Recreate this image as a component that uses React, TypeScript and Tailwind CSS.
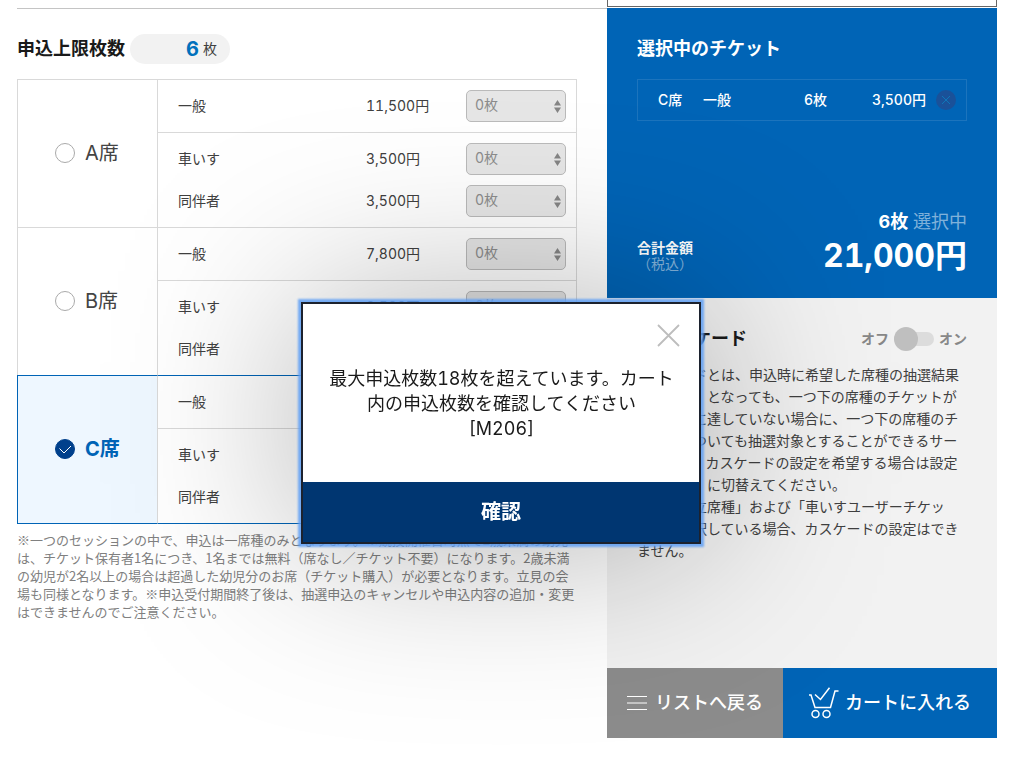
import React from "react";

interface Ticket {
  label: string;
  price: string;
  count: number;
}

interface Seat {
  id: string;
  name: string;
  tickets: Ticket[];
}

const seats: Seat[] = [
  {
    id: "a",
    name: "A席",
    tickets: [
      { label: "一般", price: "11,500円", count: 0 },
      { label: "車いす", price: "3,500円", count: 0 },
      { label: "同伴者", price: "3,500円", count: 0 },
    ],
  },
  {
    id: "b",
    name: "B席",
    tickets: [
      { label: "一般", price: "7,800円", count: 0 },
      { label: "車いす", price: "3,500円", count: 0 },
      { label: "同伴者", price: "3,500円", count: 0 },
    ],
  },
  {
    id: "c",
    name: "C席",
    tickets: [
      { label: "一般", price: "3,500円", count: 6 },
      { label: "車いす", price: "3,500円", count: 0 },
      { label: "同伴者", price: "3,500円", count: 0 },
    ],
  },
];

const cascadeText = [
  "カスケードとは、申込時に希望した席種の抽選結果",
  "が「落選」となっても、一つ下の席種のチケットが",
  "予定枚数に達していない場合に、一つ下の席種のチ",
  "ケットについても抽選対象とすることができるサー",
  "ビスです。カスケードの設定を希望する場合は設定",
  "を「オン」に切替えてください。",
  "なお「独立席種」および「車いすユーザーチケッ",
  "ト」を選択している場合、カスケードの設定はでき",
  "ません。",
];

const noteText = [
  "※一つのセッションの中で、申込は一席種のみとなります。※競技開催日時点で2歳未満の幼児",
  "は、チケット保有者1名につき、1名までは無料（席なし／チケット不要）になります。2歳未満",
  "の幼児が2名以上の場合は超過した幼児分のお席（チケット購入）が必要となります。立見の会",
  "場も同様となります。※申込受付期間終了後は、抽選申込のキャンセルや申込内容の追加・変更",
  "はできませんのでご注意ください。",
];

const Lines: React.FC<{ lines: string[] }> = ({ lines }) => (
  <>
    {lines.map((line) => (
      <span key={line} className="block whitespace-nowrap">
        {line}
      </span>
    ))}
  </>
);

const CountSelect: React.FC<{ label: string; count: number }> = ({
  label,
  count,
}) => (
  <div className="relative w-[100px]">
    <select
      aria-label={label}
      disabled
      defaultValue={count}
      className="block h-8 w-full appearance-none rounded-[5px] border border-[#bababa] bg-[#e6e6e6] pb-[2px] pl-2 text-sm text-[#8c8c8c] opacity-100"
    >
      {[0, 1, 2, 3, 4, 5, 6].map((n) => (
        <option key={n} value={n}>
          {n}枚
        </option>
      ))}
    </select>
    <svg
      className="pointer-events-none absolute top-[10px] right-[5px]"
      width="7"
      height="13"
      viewBox="0 0 7 13"
      fill="#858585"
      aria-hidden="true"
    >
      <path d="M3.5 0 7 5.5H0zM3.5 13 0 7.5h7z" />
    </svg>
  </div>
);

const SeatRows: React.FC<{ seat: Seat; checked: boolean; last: boolean }> = ({
  seat,
  checked,
  last,
}) => {
  const top = checked ? "border-t-[#0064b6]" : "border-t-[#d9d9d9]";
  const right = checked ? "border-r-[#0064b6]" : "border-r-[#d9d9d9]";
  const bottom = last ? "border-b border-b-[#0064b6]" : "";
  // padding and rules of the three ticket rows of a seat
  const rowStyles = [
    `border-t py-[10px] ${top}`,
    "border-t border-t-[#d9d9d9] pt-[10px]",
    `py-[10px] ${bottom}`,
  ];

  return (
    <tbody>
      {seat.tickets.map((ticket, i) => (
        <tr key={ticket.label}>
          {i === 0 && (
            <th
              rowSpan={3}
              scope="rowgroup"
              className={`w-[141px] border-x border-t border-r-[#d9d9d9] pb-[2px] pl-[37px] text-left ${top} ${bottom} ${
                checked ? "border-l-[#0064b6] bg-[#eef7ff]" : "border-l-[#d9d9d9]"
              }`}
            >
              <label
                className={`flex items-center gap-[10px] text-xl leading-7 ${
                  checked ? "font-bold text-[#0064b6]" : "font-normal text-[#444]"
                }`}
              >
                <span className="relative block size-5">
                  <input
                    type="radio"
                    name="seat"
                    defaultChecked={checked}
                    className="block size-5 appearance-none rounded-full border border-[#aaa] bg-white checked:border-[#00408c] checked:bg-[#00408c]"
                  />
                  {checked && (
                    <svg
                      className="pointer-events-none absolute inset-0"
                      width="20"
                      height="20"
                      viewBox="0 0 20 20"
                      fill="none"
                      stroke="#fff"
                      aria-hidden="true"
                    >
                      <path d="m4.500 9.500 4.500 4.500 7-7" />
                    </svg>
                  )}
                </span>
                {seat.name}
              </label>
            </th>
          )}
          <td className={`pl-5 ${rowStyles[i]}`}>{ticket.label}</td>
          <td className={`w-[100px] ${rowStyles[i]}`}>{ticket.price}</td>
          <td className={`w-[111px] border-r ${right} ${rowStyles[i]}`}>
            <CountSelect
              label={`${seat.name} ${ticket.label}`}
              count={ticket.count}
            />
          </td>
        </tr>
      ))}
    </tbody>
  );
};

const SeatSection: React.FC = () => (
  <section className="mt-2 min-w-0 flex-1 border-t border-[#c4c4c4] pt-[25px] pr-[30px]">
    <div className="mb-[15px] flex h-[30px] items-center gap-[5px]">
      <h2 className="text-lg leading-7 font-bold text-[#1a1a1a]">
        申込上限枚数
      </h2>
      <p className="flex h-[30px] w-[100px] items-center justify-end gap-1 rounded-full bg-[#f2f2f2] pr-[13px]">
        <strong className="text-xl leading-7 text-[#0071bc]">6</strong>
        枚
      </p>
    </div>
    <table className="w-full table-auto border-separate border-spacing-0">
      {seats.map((seat, i) => (
        <SeatRows
          key={seat.id}
          seat={seat}
          checked={seat.id === "c"}
          last={i === seats.length - 1}
        />
      ))}
    </table>
    <p className="mt-[7px] font-['Noto_Sans_CJK_JP',sans-serif] text-[13px] leading-[18px] text-[#808080]">
      <Lines lines={noteText} />
    </p>
  </section>
);

const SelectedTickets: React.FC = () => (
  <section className="flex min-h-[290px] flex-col bg-[#0064b6] px-[30px] pt-[27px] pb-[22px] text-white">
    <h2 className="text-lg leading-7 font-bold">選択中のチケット</h2>
    <div className="mt-4 flex h-[42px] items-center border border-[#1c74bd] pr-[10px] pl-5 font-medium">
      <span className="w-[45px]">C席</span>
      <span className="flex-1">一般</span>
      <span className="w-[68px]">6枚</span>
      <span className="mr-[10px]">3,500円</span>
      <button
        type="button"
        aria-label="削除"
        className="flex size-5 items-center justify-center rounded-full bg-[#1a5199]"
      >
        <svg width="10" height="10" viewBox="0 0 10 10" stroke="#0e77ba">
          <path d="m1 1 8 8M9 1 1 9" />
        </svg>
      </button>
    </div>
    <div className="mt-auto text-right text-lg leading-7 text-white/50">
      <strong className="text-white">6枚</strong> 選択中
    </div>
    <div className="flex items-center justify-between">
      <p className="text-center leading-4">
        <strong className="block">合計金額</strong>
        <span className="block text-white/50">（税込）</span>
      </p>
      <strong className="text-[32px] leading-10">21,000円</strong>
    </div>
  </section>
);

const Cascade: React.FC = () => (
  <section className="min-h-[370px] bg-[#f2f2f2] px-[30px] pt-[27px]">
    <div className="flex items-center justify-between">
      <h2 className="pl-5 text-lg leading-7 font-bold text-[#1a1a1a]">
        カスケード
      </h2>
      <label className="flex items-center gap-[5px] font-bold text-[#888]">
        オフ
        <input
          type="checkbox"
          aria-label="カスケード"
          className="h-[14px] w-10 appearance-none rounded-full bg-[#dcdcdc] before:-mt-[5px] before:block before:size-6 before:rounded-full before:bg-[#bfbfbf]"
        />
        オン
      </label>
    </div>
    <p className="mt-[11px] leading-[22px]">
      <Lines lines={cascadeText} />
    </p>
  </section>
);

const CartIcon: React.FC = () => (
  <svg
    width="30"
    height="32"
    viewBox="0 0 30 32"
    fill="none"
    stroke="currentColor"
    strokeWidth="1.500"
    aria-hidden="true"
  >
    <path d="M0 8h2l4 12.500h15.500L26 4h3.500" />
    <path d="m6 7.500 5.500 5L20.500.8" />
    <circle cx="6.500" cy="27" r="3.500" />
    <circle cx="17.500" cy="27" r="3.500" />
  </svg>
);

const Dialog: React.FC = () => (
  <div className="absolute inset-x-0 top-0 flex justify-center pt-[302px] pr-[18px]">
    <div className="drop-shadow-[0_0_90px_rgba(0,0,0,0.3)]">
      <div
        role="dialog"
        aria-modal="true"
        className="w-[400px] border-2 border-[#1c222e] bg-white shadow-[0_0_2px_3px_rgba(95,160,245,0.85)]"
      >
        <div className="flex min-h-[178px] flex-col pr-[19px] pl-5">
          <button
            type="button"
            aria-label="閉じる"
            className="mt-5 self-end text-[#bdbdbd]"
          >
            <svg
              width="23"
              height="23"
              viewBox="0 0 23 23"
              stroke="currentColor"
              strokeWidth="1.800"
            >
              <path d="m1 1 21 21M22 1 1 22" />
            </svg>
          </button>
          <p className="mt-[19px] text-center text-lg leading-[25px] text-[#1a1a1a]">
            <Lines
              lines={[
                "最大申込枚数18枚を超えています。カート",
                "内の申込枚数を確認してください",
                "[M206]",
              ]}
            />
          </p>
        </div>
        <button
          type="button"
          className="block h-[60px] w-full bg-[#003671] text-xl font-bold text-white"
        >
          確認
        </button>
      </div>
    </div>
  </div>
);

const App: React.FC = () => (
  <div
    lang="ja"
    className="relative min-h-screen overflow-hidden bg-white font-['Inter','Noto_Sans_CJK_JP',sans-serif] text-sm text-[#404040] tabular-nums"
  >
    <main className="flex pr-[23px] pl-[17px]">
      <SeatSection />
      <aside className="w-[390px] shrink-0">
        <div className="mb-px h-[7px] border border-t-0 border-[#666]"></div>
        <SelectedTickets />
        <Cascade />
        <div className="flex h-[70px] text-lg font-medium text-white">
          <button
            type="button"
            className="flex w-[176px] items-center justify-center gap-2 bg-[#8c8c8c]"
          >
            <svg
              width="20"
              height="14"
              viewBox="0 0 20 14"
              stroke="currentColor"
              aria-hidden="true"
            >
              <path d="M0 .5h20M0 7h20M0 13.500h20" />
            </svg>
            リストへ戻る
          </button>
          <button
            type="button"
            className="flex flex-1 items-center justify-center gap-[6px] bg-[#0064b6]"
          >
            <CartIcon />
            カートに入れる
          </button>
        </div>
      </aside>
    </main>
    <Dialog />
  </div>
);

export default App;
